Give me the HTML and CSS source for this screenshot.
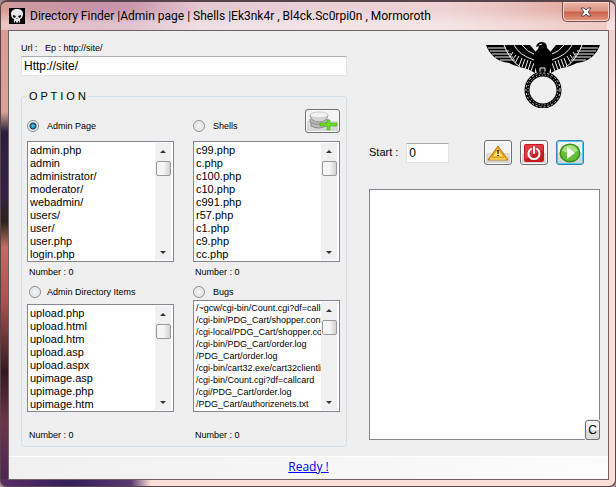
FILE: index.html
```html
<!DOCTYPE html>
<html lang="en">
<head>
<meta charset="utf-8">
<title>Directory Finder</title>
<link rel="stylesheet" href="styles.css">
</head>
<body>
<div class="window">
  <header class="titlebar">
    <svg class="skull" viewBox="0 0 16 16" aria-hidden="true">
      <path fill="#000" d="M0 0h16v16H0z"/>
      <path fill="#e8e8e8" d="M8 1C4 1 2 3 2 6c0 2 1 3 1 4l2 1v3l1 1 1-1 1 1 1-1 1 1 1-1v-3l2-1c0-1 1-2 1-4 0-3-2-5-6-5z"/>
      <path fill="#111" d="M4 7l3 1-1 2-2-1zM12 7L9 8l1 2 2-1zM8 10l1 1H7zM6 13h1v2H6zM9 13h1v2H9z"/>
    </svg>
    <h1 class="title">Directory Finder |Admin page | Shells |Ek3nk4r , Bl4ck.Sc0rpi0n , Mormoroth</h1>
    <button class="close" aria-label="Close">
      <svg viewBox="0 0 12 10" aria-hidden="true"><path fill="#fff" stroke="#5b4a50" stroke-width="1" d="M1 1h3l2 2 2-2h3L8 5l3 4H8L6 7 4 9H1l3-4z"/></svg>
    </button>
  </header>
  <div class="client">
    <main class="content">
      <section class="left">
        <label class="small url-label" for="url">Url :&nbsp;&nbsp; Ep : http://site/</label>
        <input class="field" id="url" type="text" value="Http://site/">
        <fieldset class="options">
          <legend>O P T I O N</legend>
          <div class="columns">
            <div class="column">
              <label class="choice small"><input type="radio" name="kind" checked>Admin Page</label>
              <div class="list">
                <select multiple aria-label="Admin pages">
                  <option>admin.php</option><option>admin</option><option>administrator/</option><option>moderator/</option><option>webadmin/</option><option>users/</option><option>user/</option><option>user.php</option><option>login.php</option>
                </select>
                <div class="scroll"><i class="up"></i><i class="thumb"></i><i class="down"></i></div>
              </div>
              <p class="small count">Number : 0</p>
            </div>
            <div class="column">
              <div class="choice-row">
                <label class="choice small"><input type="radio" name="kind">Shells</label>
                <button class="tool add" aria-label="Add list">
                  <svg viewBox="0 0 30 20" aria-hidden="true">
                    <path fill="#bbb" stroke="#888" d="M3 12v3q8 4 15 0v-3M2 8v3q9 5 18 0V8"/>
                    <path fill="#d4d4d4" stroke="#8b8b8b" d="M2 4q1 7 9 7t9-7z"/>
                    <ellipse cx="11" cy="4" rx="9" ry="3" fill="#f1f1f1" stroke="#ccc"/>
                    <path fill="#6edb22" stroke="#44ad16" stroke-width=".6" d="M19 9h3v3h7v3h-7v4h-3v-4h-7v-3h7z"/>
                  </svg>
                </button>
              </div>
              <div class="list">
                <select multiple aria-label="Shells">
                  <option>c99.php</option><option>c.php</option><option>c100.php</option><option>c10.php</option><option>c991.php</option><option>r57.php</option><option>c1.php</option><option>c9.php</option><option>cc.php</option>
                </select>
                <div class="scroll"><i class="up"></i><i class="thumb"></i><i class="down"></i></div>
              </div>
              <p class="small count">Number : 0</p>
            </div>
          </div>
          <div class="columns lower">
            <div class="column">
              <label class="choice small indent"><input type="radio" name="kind">Admin Directory Items</label>
              <div class="list short">
                <select multiple aria-label="Admin directory items">
                  <option>upload.php</option><option>upload.html</option><option>upload.htm</option><option>upload.asp</option><option>upload.aspx</option><option>upimage.asp</option><option>upimage.php</option><option>upimage.htm</option>
                </select>
                <div class="scroll"><i class="up"></i><i class="thumb"></i><i class="down"></i></div>
              </div>
              <p class="small count">Number : 0</p>
            </div>
            <div class="column">
              <label class="choice small"><input type="radio" name="kind">Bugs</label>
              <div class="list dense">
                <select multiple aria-label="Bugs">
                  <option>/~gcw/cgi-bin/Count.cgi?df=callcard</option><option>/cgi-bin/PDG_Cart/shopper.conf</option><option>/cgi-local/PDG_Cart/shopper.conf</option><option>/cgi-bin/PDG_Cart/order.log</option><option>/PDG_Cart/order.log</option><option>/cgi-bin/cart32.exe/cart32clientlist</option><option>/cgi-bin/Count.cgi?df=callcard</option><option>/cgi/PDG_Cart/order.log</option><option>/PDG_Cart/authorizenets.txt</option>
                </select>
                <div class="scroll"><i class="up"></i><i class="thumb"></i><i class="down"></i></div>
              </div>
              <p class="small count">Number : 0</p>
            </div>
          </div>
        </fieldset>
      </section>
      <section class="right">
        <svg class="emblem" viewBox="0 0 114 66" aria-hidden="true">
          <defs>
            <g id="wing">
              <path d="M0 3h44l5 6v22q-8-5-16-6-6-2-10-4Q6 19 0 3z"/>
              <g fill="none" stroke="#efefef" stroke-width="1">
                <path d="M2 6h18M4 9h19M6 12h19M9 15h18M14 18h15"/>
                <path d="M18 3q5 14 16 22M28 3q5 10 20 15M36 3q5 7 12 9"/>
                <path d="M27 10l-3 5M30 13l-4 5M33 14l-4 7M36 16l-3 8M39 17l-3 8M42 18l-3 9M45 19l-3 9M48 21l-3 8"/>
              </g>
            </g>
          </defs>
          <use href="#wing"/>
          <use href="#wing" transform="matrix(-1 0 0 1 114 0)"/>
          <path d="M48 11l4-4 1-3-3 1q1-5 6-5 5 0 5 6l5 5v12l-3 8H51l-3-8z"/>
          <path d="M53 3l3-1" stroke="#efefef" fill="none"/>
          <path d="M54 26h5v6h-5z" fill="#111" stroke="#efefef"/>
          <circle cx="57" cy="48" r="16" fill="#efefef" stroke="#000" stroke-width="5"/>
          <circle cx="57" cy="48" r="17" fill="none" stroke="#efefef" stroke-width="1" stroke-dasharray="2 2"/>
          <circle cx="57" cy="48" r="15" fill="none" stroke="#efefef" stroke-width="1" stroke-dasharray="1 2"/>
        </svg>
        <div class="controls">
          <label for="start">Start :</label>
          <input class="field start" id="start" type="text" value="0">
          <div class="tools">
            <button class="tool" aria-label="Warning">
              <svg viewBox="0 0 22 20" aria-hidden="true"><path fill="#f5a91b" stroke="#c17509" d="M11 3l10 14H1z"/><path fill="#ffe46a" stroke="#e79a0c" d="M11 5l6 9H5z"/><path fill="#4b3410" d="M10 7h2l-.5 4h-1zM10 12h2v1h-2z"/><path stroke="#fff09c" d="M3 16h16"/></svg>
            </button>
            <button class="tool" aria-label="Stop">
              <svg viewBox="0 0 22 20" aria-hidden="true"><rect x="1" y="1" width="20" height="18" rx="2" fill="#c8191e"/><path fill="#e4575a" d="M2 2h18v5L2 16z" opacity=".6"/><path fill="none" stroke="#fff" stroke-width="2" stroke-linecap="round" d="M8 6a5.500 5.500 0 1 0 6 0M11 4v6"/></svg>
            </button>
            <button class="tool active" aria-label="Run">
              <svg viewBox="0 0 22 20" aria-hidden="true"><ellipse cx="11" cy="10" rx="10.500" ry="9.500" fill="#388d16"/><ellipse cx="11" cy="10" rx="9" ry="8" fill="#63bd35"/><path fill="#a6df84" d="M3 8q2-6 8-6t8 6q-8 4-16 0z"/><path fill="#fff" d="M8 4l8 6-8 6z"/></svg>
            </button>
          </div>
        </div>
        <div class="output">
          <textarea aria-label="Results"></textarea>
          <button class="clear">C</button>
        </div>
      </section>
    </main>
    <footer class="status"><a href="#">Ready !</a></footer>
  </div>
</div>
</body>
</html>
```
FILE: styles.css
```css
* { box-sizing: border-box; }
body {
  margin: 0;
  background: #a58b92;
  font: 11px/13px "Liberation Sans", sans-serif;
  color: #000;
}
.window {
  display: flex;
  flex-direction: column;
  min-height: 100vh;
  padding: 0 6px 6px 7px;
  border: 1px solid #57434a;
  border-top-width: 2px;
  border-radius: 7px;
  background:
    linear-gradient(90deg, #5c2c66, #34205a 70px, #5a3a70 130px, #fbe0da 150px) bottom / 100% 7px no-repeat,
    linear-gradient(#d99c93, #dba096 110px, #28203c 130px, #37204a 190px, #2a2518 220px, #c46c62 245px, #a9524f 300px, #35191f 370px, #70344a 420px, #4a2458) left / 8px 100% no-repeat,
    linear-gradient(#ecc8ca, #fbe0da 90px) right / 8px 100% no-repeat,
    linear-gradient(90deg, #cf9ca0, #c793a8 100px, #dbb4c0 300px, #e6bfc0 450px, #e4a99b);
}
.titlebar {
  display: flex;
  align-items: center;
  height: 28px;
  margin: 0 -6px 0 -7px;
  padding: 0 5px 0 8px;
  gap: 5px;
  background: linear-gradient(90deg, #fff0 130px, #fff6 200px, #fff5 440px, #fff0 560px), linear-gradient(#fff0 8px, #fbeff280 22px, #fff6);
}
.skull { width: 16px; height: 16px; }
.title {
  flex: 1;
  margin: 0;
  font: 12px/16px Roboto, sans-serif;
  white-space: nowrap;
}
.close {
  align-self: flex-start;
  display: grid;
  place-items: center;
  width: 48px;
  height: 20px;
  padding: 0;
  border: 1px solid #74524f;
  border-top: 0;
  border-radius: 0 0 5px 5px;
  background: linear-gradient(#e9b6a8, #dd9484 9px, #c8604e 10px, #e39a80);
  box-shadow: inset 0 0 0 1px #f6d3ca;
}
.close svg { width: 12px; height: 10px; }
.client {
  flex: 1;
  display: flex;
  flex-direction: column;
  border: 1px solid #6e6265;
  background: #efefef;
}
.content {
  flex: 1;
  display: grid;
  grid-template-columns: 326fr 231fr;
  gap: 22px;
  padding: 11px 8px 9px 12px;
}
.left, .right { display: flex; flex-direction: column; min-width: 0; }
.small { font-size: 9px; line-height: 12px; }
.url-label { margin-bottom: 2px; }
.field {
  height: 20px;
  width: 100%;
  padding: 0 2px;
  border: 1px solid #dfe3ea;
  border-top-color: #abadb3;
  border-radius: 1px;
  background: #fff;
  font: 12px/16px "Liberation Sans", sans-serif;
}
.options {
  flex: 1;
  min-width: 0;
  margin: 14px 0 0;
  padding: 6px 6px 0 5px;
  border: 1px solid #d3dde5;
  border-radius: 3px;
}
.options legend { padding: 0 2px; font-size: 11px; line-height: 13px; }
.columns {
  display: grid;
  grid-template-columns: 1fr 1fr;
  align-items: end;
  gap: 19px;
}
.column { display: flex; flex-direction: column; min-width: 0; }
.choice-row { display: flex; justify-content: space-between; }
.choice { display: flex; align-items: center; height: 24px; gap: 8px; }
.choice-row .choice, .column > .choice { padding-top: 10px; }
.choice input {
  appearance: none;
  width: 12px;
  height: 12px;
  margin: 0;
  border: 1px solid #8a8d91;
  border-radius: 50%;
  background: radial-gradient(#f8f8f8, #d0d2d5);
  box-shadow: inset 0 0 0 1px #f4f4f4;
}
.choice input:checked { background: radial-gradient(circle, #43bde9 0 1px, #123d5c 3px, #e3e9ed 4px); }
.list {
  display: flex;
  height: 121px;
  margin-top: 8px;
  padding: 1px;
  border: 1px solid #828790;
  background: #fff;
}
.list select {
  flex: 1;
  min-width: 0;
  height: 100%;
  margin: 0;
  padding: 1px 0 0 1px;
  border: 0;
  border-radius: 0;
  overflow: hidden;
  background: #fff;
  font: 11px/13px "Liberation Sans", sans-serif;
}
.list option { height: 13px; min-height: 0; padding: 0; line-height: 13px; color: #000; }
.scroll {
  display: flex;
  flex-direction: column;
  align-items: center;
  width: 16px;
  margin-right: 1px;
  background: #f0f0f0;
}
.up, .down { border: 3px solid transparent; }
.up { margin-top: 4px; border-bottom-color: #333; }
.down { margin: auto 0 3px; border-top-color: #333; }
.thumb {
  width: 15px;
  height: 15px;
  margin-top: 8px;
  border: 1px solid #989898;
  border-radius: 2px;
  background: linear-gradient(90deg, #f5f5f5 50%, #d2d2d4);
}
.count { margin: 4px 0 0 2px; }
.lower .column > .choice { height: 16px; padding-top: 0; margin-top: 6px; }
.lower .indent { padding-left: 2px; gap: 6px; }
.lower .list { height: 112px; margin-top: 0; }
.lower .list.short { height: 108px; margin-top: 4px; }
.lower .count { margin-top: 17px; }
.dense select { font-size: 9px; line-height: 12px; }
.dense option { height: 12px; line-height: 12px; }
.tool {
  display: grid;
  place-items: center;
  width: 28px;
  height: 25px;
  padding: 0;
  border: 1px solid #707070;
  border-radius: 3px;
  background: linear-gradient(#f4f4f4 50%, #dcdcdc 50%, #d4d4d4);
  box-shadow: inset 0 0 0 1px #fafafa;
}
.tool svg { width: 22px; height: 20px; }
.tool.add { width: 35px; height: 24px; }
.tool.add svg { width: 30px; height: 20px; }
.tool.active { border-color: #3c7fb1; box-shadow: inset 0 0 0 1px #48cdf5; }
.emblem { align-self: flex-end; width: 114px; height: 66px; }
.controls {
  display: flex;
  align-items: center;
  margin-top: 32px;
}
.controls label { font-size: 11px; }
.start { width: 43px; margin-left: 8px; }
.tools { display: flex; gap: 8px; margin: 0 16px 0 auto; }
.output { position: relative; flex: 1; display: flex; margin: 24px 0 7px; }
.output textarea {
  flex: 1;
  min-width: 0;
  border: 1px solid #828790;
  background: #fff;
  resize: none;
}
.clear {
  position: absolute;
  right: 0;
  bottom: 0;
  width: 15px;
  height: 20px;
  padding: 0;
  border: 1px solid #707070;
  border-radius: 3px;
  background: linear-gradient(#f4f4f4 50%, #dcdcdc 50%);
  font: 12px/16px "Liberation Sans", sans-serif;
  box-shadow: 0 0 0 1px #efefef;
}
.status {
  height: 23px;
  border-top: 1px solid #fff;
  background: linear-gradient(90deg, #f0f0f0, #fcfcfc);
  text-align: center;
  font: 12px/20px "Open Sans", sans-serif;
}
.status a { color: #00f; }
```
